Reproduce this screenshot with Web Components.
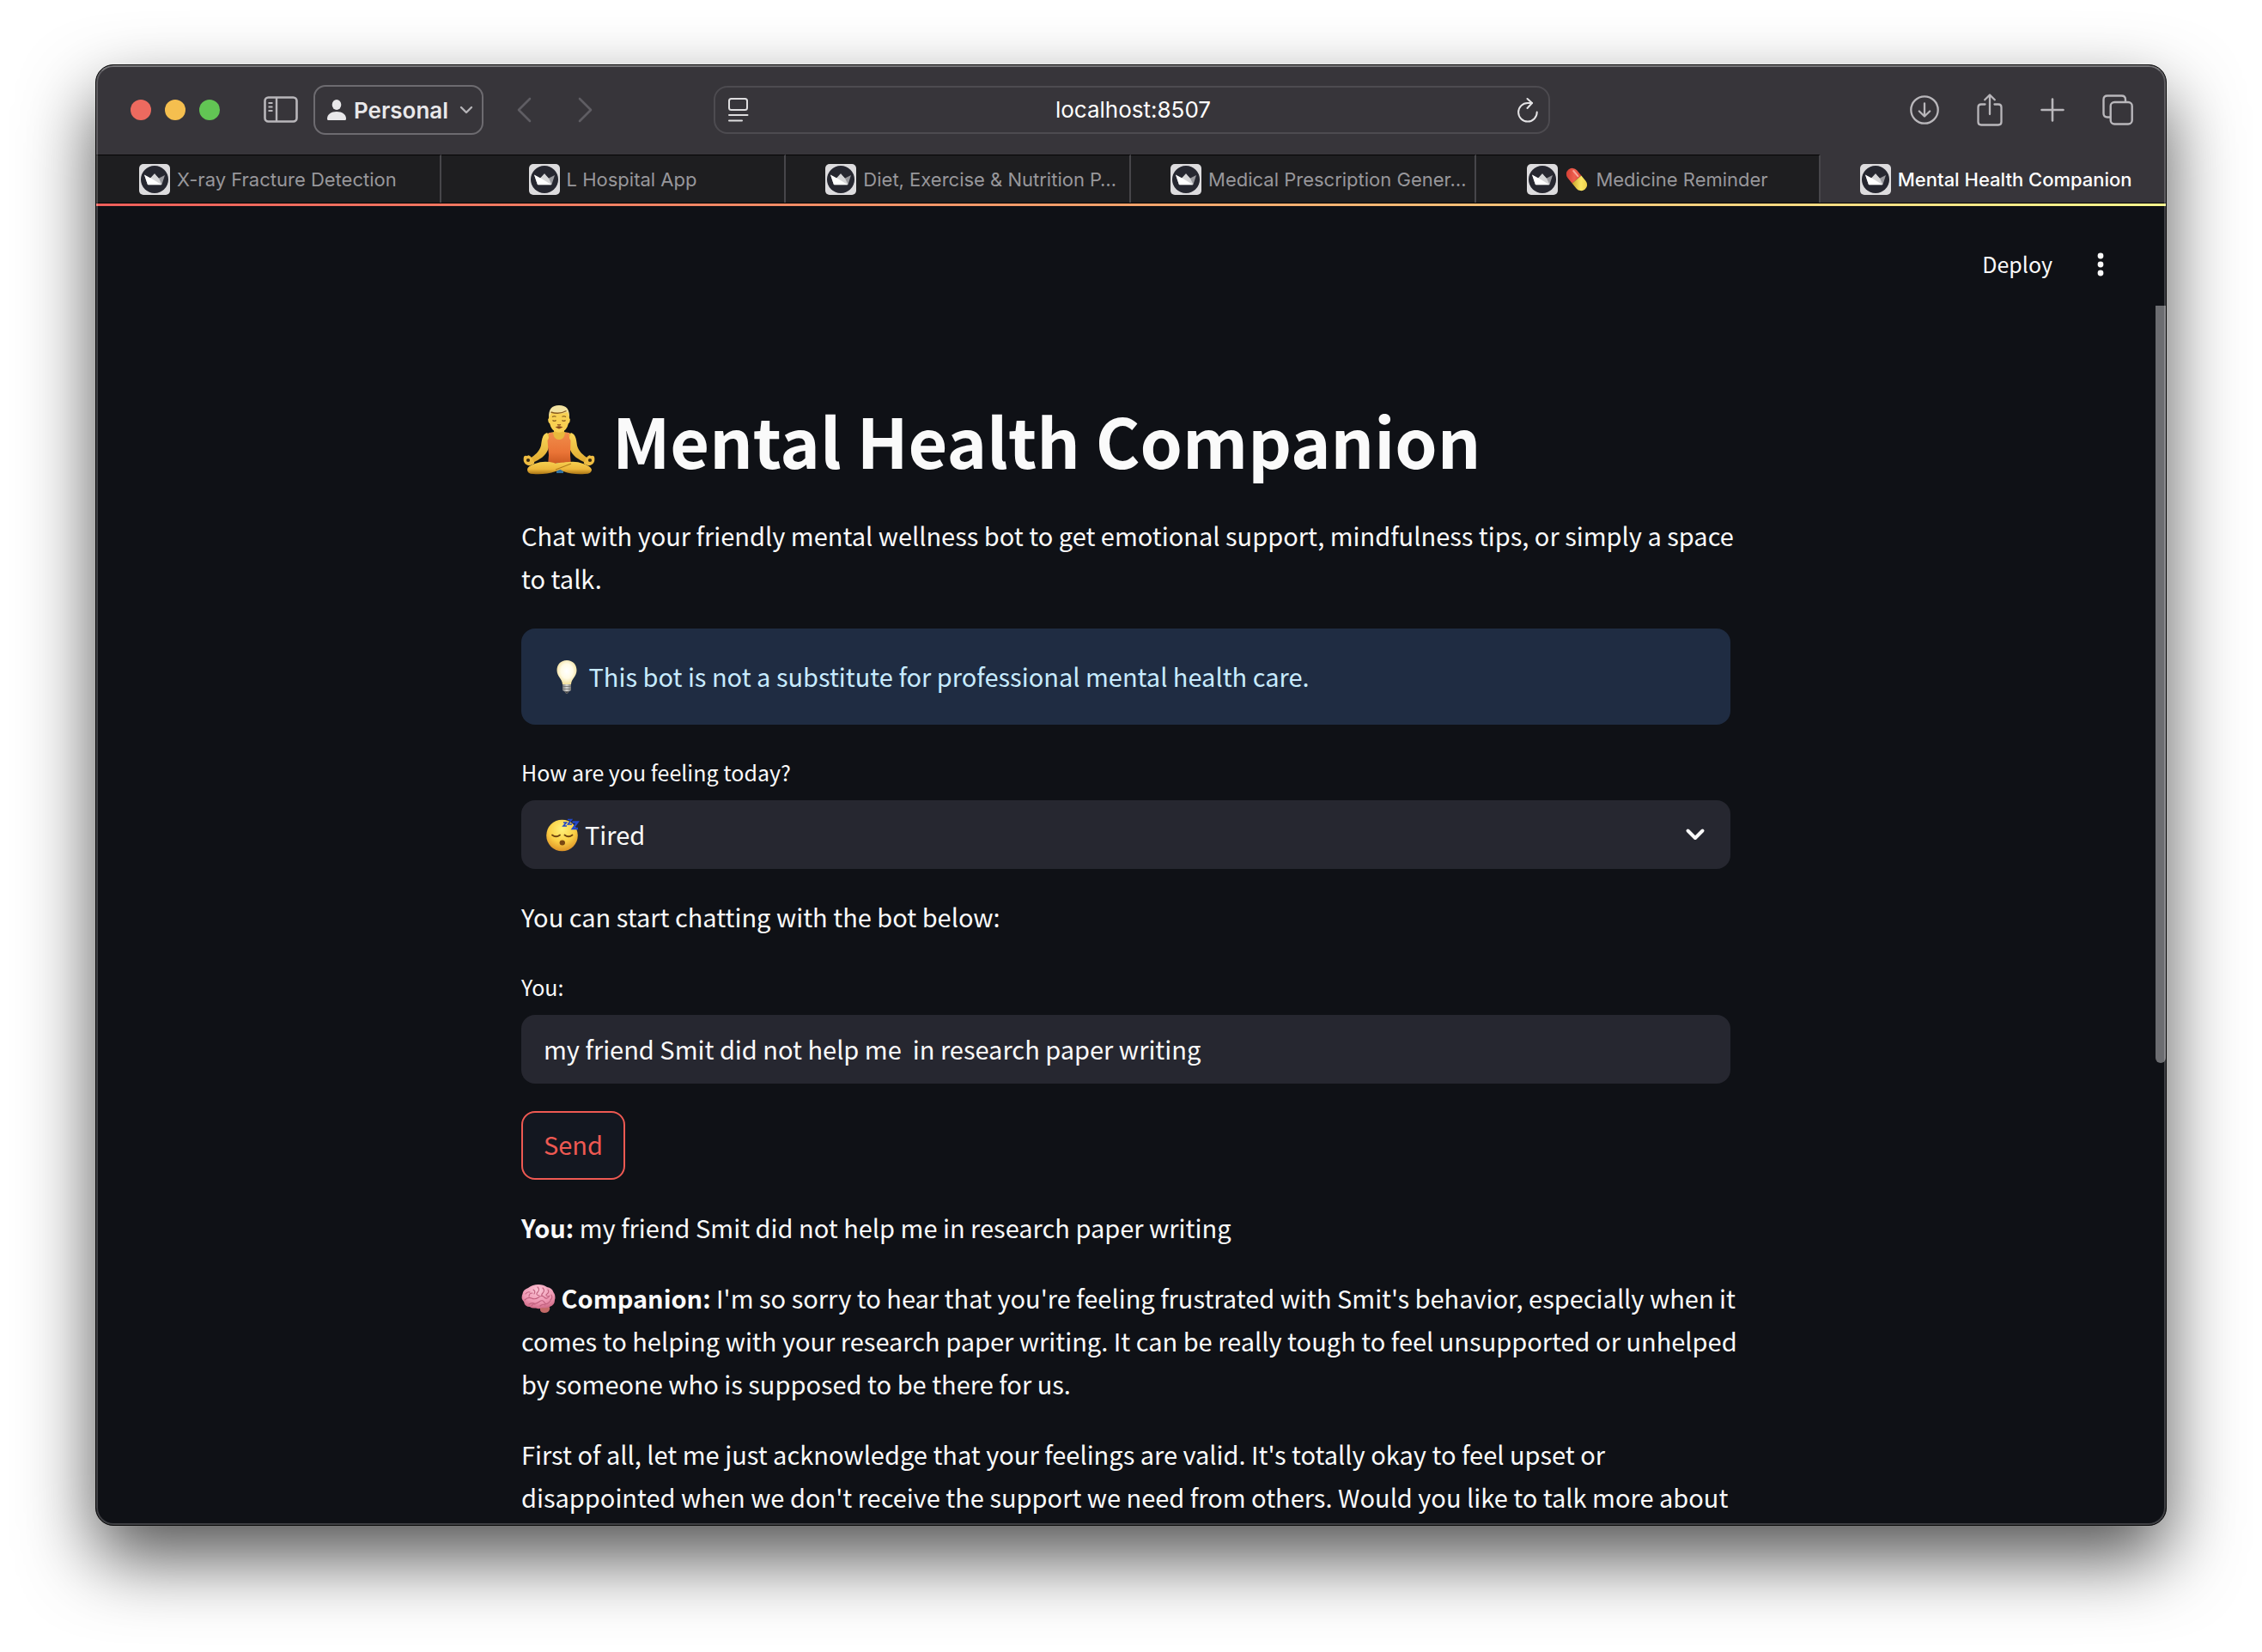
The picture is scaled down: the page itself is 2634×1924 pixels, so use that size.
<!DOCTYPE html>
<html lang="en">
<head>
<meta charset="utf-8">
<title>Mental Health Companion</title>
<style>
  html, body { height: 100%; margin: 0; }
  body {
    --ui: Inter, "Liberation Sans", sans-serif;
    --app: "Noto Sans CJK SC", "Noto Sans", sans-serif;
    box-sizing: border-box;
    display: flex;
    padding: 75px 111px 147px;
    background: #fff;
    overflow: hidden;
  }
</style>
</head>
<body>
<browser-window>
  <browser-toolbar slot="toolbar" address="localhost:8507" profile="Personal"></browser-toolbar>
  <nav slot="tabs" aria-label="Tabs" style="display:contents">
    <browser-tab>X-ray Fracture Detection</browser-tab>
    <browser-tab>L Hospital App</browser-tab>
    <browser-tab clipped>Diet, Exercise &amp; Nutrition P…</browser-tab>
    <browser-tab clipped>Medical Prescription Gener…</browser-tab>
    <browser-tab><ui-icon name="pill" style="--w:28px;--h:30px"></ui-icon>Medicine Reminder</browser-tab>
    <browser-tab active>Mental Health Companion</browser-tab>
  </nav>
  <app-header></app-header>
  <chat-page></chat-page>
</browser-window>

<script>
const ICONS = {
  sidebar: ['0 0 40 32', `<g fill="none" stroke="#b9b7bb"><rect x="1.5" y="1.5" width="37" height="28" rx="4" stroke-width="2.6"/><path d="M15 2v27" stroke-width="2.4"/><path d="M5.5 8h5M5.5 12.500h5M5.500 17h5" stroke-width="2"/></g>`],
  person: ['0 0 22 24', `<g fill="#e9e8ea"><ellipse cx="11" cy="6" rx="5.300" ry="6"/><path d="M0 22.500C0 17 4.500 14 11 14s11 3 11 8.500q0 1.500-1.500 1.500h-19Q0 24 0 22.500z"/></g>`],
  chevronSmall: ['0 0 16 10', `<path d="M2 2l6 6 6-6" fill="none" stroke="#b5b3b7" stroke-width="2.400" stroke-linecap="round" stroke-linejoin="round"/>`],
  back: ['0 0 18 30', `<path d="M16 2L3 15l13 13" fill="none" stroke="#5f5d63" stroke-width="2.600" stroke-linecap="round" stroke-linejoin="round"/>`],
  forward: ['0 0 18 30', `<path d="M2 2l13 13L2 28" fill="none" stroke="#5f5d63" stroke-width="2.600" stroke-linecap="round" stroke-linejoin="round"/>`],
  reader: ['0 0 24 28', `<g fill="none" stroke="#dedddf" stroke-width="2" stroke-linecap="round"><rect x="1" y="1" width="21" height="13" rx="2.500"/><path d="M1 20h21.500M1 26.500h15"/></g>`],
  reload: ['0 0 24 28', `<g fill="none" stroke="#e4e3e5" stroke-width="2" stroke-linecap="round" stroke-linejoin="round"><path d="M22.700 16.500A10.800 10.800 0 1 1 12 6h5"/><path d="M11.500 1l5.500 5-5.500 6"/></g>`],
  download: ['0 0 34 34', `<g fill="none" stroke="#b9b7bb" stroke-width="2.300" stroke-linecap="round" stroke-linejoin="round"><circle cx="17" cy="17" r="15.700"/><path d="M17 9.500V24M10.800 18.500l6.200 6 6.200-6"/></g>`],
  share: ['0 0 30 38', `<g fill="none" stroke="#b9b7bb" stroke-width="2.300" stroke-linecap="round" stroke-linejoin="round"><path d="M9.500 12.500H5q-3.500 0-3.500 3.500v17q0 3.500 3.500 3.500h20q3.500 0 3.500-3.500V16q0-3.500-3.500-3.500h-4.500"/><path d="M15 24V2M9.200 7.300L15 1.500l5.800 5.800"/></g>`],
  plus: ['0 0 28 28', `<path d="M14 1.500v25M1.500 14h25" fill="none" stroke="#b9b7bb" stroke-width="2.600" stroke-linecap="round"/>`],
  copies: ['0 0 36 36', `<g fill="none" stroke="#b9b7bb" stroke-width="2.400"><rect x="9.700" y="9" width="25" height="25.500" rx="4.500"/><path d="M9 26.500H6q-4.500 0-4.500-4.500V6q0-4.500 4.500-4.500h16.500Q27 1.500 27 6v2.500"/></g>`],
  favicon: ['0 0 36 36', `<rect width="36" height="36" rx="5" fill="#dddcde"/><circle cx="18" cy="18" r="16" fill="#262730"/><path d="M6 12.500L13 17l5-5.700 4.500 5.400L30 13l-3.400 10.500q-.2.800-1 .8H10.700q-.8 0-1-.8z" fill="#98989d"/><path d="M12.500 17L18 11.300l5 5.500 3.500 7.200z" fill="#d6d6d8"/><path d="M6 12.500L14 16.800l12.300 7.300-.8.200H10.700q-.8 0-1-.8z" fill="#fff"/>`],
  dots: ['0 0 8 28', `<g fill="#fafafa"><circle cx="4" cy="4" r="3.400"/><circle cx="4" cy="14" r="3.400"/><circle cx="4" cy="24" r="3.400"/></g>`],
  chevron: ['0 0 22 14', `<path d="M2.500 2.500l8.500 8.500 8.500-8.500" fill="none" stroke="#fafafa" stroke-width="4" stroke-linecap="round" stroke-linejoin="round"/>`],
  pill: ['0 0 28 30', `<defs><linearGradient id="r" x1="0" y1="1" x2="1" y2="0"><stop stop-color="#c9342c"/><stop offset=".6" stop-color="#f0604f"/><stop offset="1" stop-color="#e04a3c"/></linearGradient><linearGradient id="y" x1="0" y1="1" x2="1" y2="0"><stop stop-color="#c9a22a"/><stop offset=".5" stop-color="#fbe664"/><stop offset="1" stop-color="#e8c840"/></linearGradient></defs><g transform="rotate(50 14 15)"><path d="M14 8H6a7 7 0 0 0 0 14h8z" fill="url(#r)"/><path d="M14 8h8a7 7 0 0 1 0 14h-8z" fill="url(#y)"/><path d="M4 11.500h8" stroke="#f9a79b" stroke-width="2" stroke-linecap="round"/></g>`],
  lotus: ['0 0 88 84', `<defs>
    <linearGradient id="sk" x1="0" y1="0" x2="0" y2="1"><stop stop-color="#fad75a"/><stop offset="1" stop-color="#e0a92f"/></linearGradient>
    <linearGradient id="sh" x1="0" y1="0" x2="0" y2="1"><stop stop-color="#f08c4a"/><stop offset=".6" stop-color="#ea7436"/><stop offset="1" stop-color="#c8561e"/></linearGradient>
    <linearGradient id="lg" x1="0" y1="0" x2="0" y2="1"><stop stop-color="#f6cf50"/><stop offset=".6" stop-color="#eeb73a"/><stop offset="1" stop-color="#a87416"/></linearGradient></defs>
    <path d="M30 34c-6 2-6 9-7 15-2 7-7 11-13 15l3 5c9-4 15-8 18-15l4-14z" fill="url(#sk)"/>
    <path d="M58 34c6 2 6 9 7 15 2 7 7 11 13 15l-3 5c-9-4-15-8-18-15l-4-14z" fill="url(#sk)"/>
    <path d="M38 26h12v7l8 2-4 9H34l-4-9 8-2z" fill="#e9b93c"/>
    <path d="M32 34q3-.5 5 0 1 8 7 8t7-8q2-.5 5 0-1 6 1.500 9L57 60l1 12H31l1-12-1.500-17Q33 40 32 34z" fill="url(#sh)"/>
    <path d="M41 69h8v12h-8z" fill="#2f6fa0"/>
    <path d="M3 62q-1.500 5 2 8.500 4 3 8 .5 3-1 2-3l-3-5q-3-4-5-2-3-1-4 1z" fill="#efbd42"/><circle cx="8" cy="66" r="2.100" fill="#3a2a10"/>
    <path d="M85 62q1.500 5-2 8.500-4 3-8 .5-3-1-2-3l3-5q3-4 5-2 3-1 4 1z" fill="#efbd42"/><circle cx="80" cy="66" r="2.100" fill="#3a2a10"/>
    <path d="M50 69q12-3 22 1 9 3 10 7 0 5-8 5-14 1-25-3l-13-8q8-3 14-2z" fill="url(#lg)"/>
    <path d="M38 69q-12-3-22 1-9 3-9 7 0 5 7 5 14 1 26-3l22-9q-12-4-20 1z" fill="url(#lg)"/>
    <path d="M40 77l18-7" stroke="#b07c1c" stroke-width="1.200" fill="none"/>
    <path d="M33 10q-1 3-1 7-1.500 1-.5 4 .5 2 1.500 2 2 8 7.500 10 3.500 1.300 7 0Q53 31 55 23q1 0 1.500-2 1-3-.5-4 0-4-1-7-3-4-11-4t-11 4z" fill="#f8d052"/>
    <path d="M32.500 16Q31 2 44 2t11.500 14l-1.500-6q-10 3-19 0z" fill="#f2e2a0"/>
    <path d="M34.500 10q10 3 18-1.500" stroke="#8a5a1c" stroke-width="1.400" fill="none"/>
    <path d="M36 15.500q2-1.300 4.500-.3M47.500 15.200q2.500-1 4.500.3M36.500 19.500q2 1.500 4 0M47.500 19.500q2 1.500 4 0" stroke="#7a4e18" stroke-width="1.200" fill="none"/>
    <path d="M42 24.500q2 1.200 4 0M41 27.500q3-1.200 6 0l-3 1.300z" stroke="#8a4a1c" stroke-width="1.100" fill="#8a4a1c"/>`],
  bulb: ['0 0 40 40', `<defs><radialGradient id="b" cx=".5" cy=".45" r=".6"><stop stop-color="#fff"/><stop offset=".5" stop-color="#fffbe6"/><stop offset="1" stop-color="#efd98c"/></radialGradient><linearGradient id="m"><stop stop-color="#777"/><stop offset=".5" stop-color="#d8d8d4"/><stop offset="1" stop-color="#777"/></linearGradient></defs><path d="M21 1c7 0 11.500 5 11.500 11.500C32.500 20 26.500 22 26 29H16C15.500 22 9.500 20 9.500 12.500 9.500 6 14 1 21 1z" fill="url(#b)"/><path d="M16 29h10v7q-1 1-2.500 1.200L22 39.500h-2l-1.500-2.300Q17 37 16 36z" fill="url(#m)"/><path d="M16 31.500h10M16 34.500h10" stroke="#6e6e6a" stroke-width=".8"/><path d="M18.500 37.200h5L22 39.500h-2z" fill="#444"/>`],
  sleepy: ['0 0 40 40', `<defs><radialGradient id="f" cx=".5" cy=".3" r=".75"><stop stop-color="#fff27a"/><stop offset=".55" stop-color="#fbcf45"/><stop offset="1" stop-color="#d98a22"/></radialGradient></defs><circle cx="19.500" cy="21" r="18.300" fill="url(#f)"/><g fill="none" stroke="#6e4310" stroke-width="1.800" stroke-linecap="round"><path d="M8 20.500q4.500 3.500 9 0M22.500 20.500q4.500 3.500 9 0"/></g><ellipse cx="19.800" cy="29.500" rx="3.200" ry="3" fill="#7a4812"/><g fill="none" stroke="#2348c8" stroke-linejoin="miter"><path d="M21 6h3.500l-3.500 4h4" stroke-width="1.600"/><path d="M26 2.500h4.500L26.500 8h4.500" stroke-width="1.700"/><path d="M31.500 5.500h6l-5.500 7.500h6" stroke-width="2.400"/></g>`],
  brain: ['0 0 40 34', `<defs><radialGradient id="p" cx=".5" cy=".25" r=".8"><stop stop-color="#fbc6d6"/><stop offset=".6" stop-color="#ee97b2"/><stop offset="1" stop-color="#c9627f"/></radialGradient></defs><path d="M22 26q4 0 9-1 3 1 2 4-1 4-6 4-4 0-5-3z" fill="#c46a68"/><path d="M3 20Q-1 16 1.500 11 2 6 8 4q5-4 12-4 6 0 10 3 6 1 7.500 6 3 4 1.500 9 0 6-6 8-4 2-8 1-4 2-8 .5-5 .5-7-1.500Q4 26 3 20z" fill="url(#p)"/><g fill="none" stroke="#c0607e" stroke-width="1.100" stroke-linecap="round"><path d="M4 18q4-4 8-2t8-1 7 0 6-2M9 23q4-2 6-1t6-2 6 1 7-2M5 11q2-3 5-2M9 14q0-4 4-4M14 6q3 2 1 5M19 3q3 3 0 6t2 4M25 4q3 3 0 6t1 4M31 6q2 3-1 5t2 3M12 25q1-3 4-2M35 12q2 3-1 6M22 25q3-3 6-1"/></g>`]
};

function define(name, css, html, setup) {
  const template = document.createElement('template');
  template.innerHTML = `<style>*{box-sizing:border-box}:host{box-sizing:border-box}${css}</style>${html}`;
  customElements.define(name, class extends HTMLElement {
    constructor() {
      super();
      this.attachShadow({ mode: 'open' }).append(template.content.cloneNode(true));
    }
    connectedCallback() { if (setup) setup(this, this.shadowRoot); }
  });
}

define('ui-icon', `
  :host { display: inline-block; flex: none; width: var(--w); height: var(--h); }
  svg { display: block; width: 100%; height: 100%; overflow: visible; }
`, `<svg aria-hidden="true"></svg>`, (el, root) => {
  const [box, body] = ICONS[el.getAttribute('name')];
  const svg = root.querySelector('svg');
  svg.setAttribute('viewBox', box);
  svg.innerHTML = body;
});

define('browser-window', `
  :host {
    position: relative; flex: 1; min-width: 0; display: flex; flex-direction: column;
    border: 1px solid #0a0a0a; border-radius: 21px; background: #0f1116; overflow: hidden;
    box-shadow: 0 38px 84px rgba(0,0,0,.67);
  }
  :host::after {
    content: ""; position: absolute; inset: 0; border: 2px solid rgba(255,255,255,.2);
    border-top-color: rgba(255,255,255,.32); border-radius: 20px; pointer-events: none;
  }
  .tabs { display: flex; flex: none; height: 56px; background: #1e1e20; }
  .rainbow { flex: none; height: 4px; border-top: 1px solid #050505; background: linear-gradient(90deg, #ee5f5b, #f5a36c 50%, #fbf98e) padding-box; }
`, `<slot name="toolbar"></slot><div class="tabs"><slot name="tabs"></slot></div><div class="rainbow"></div><slot></slot>`);

define('browser-toolbar', `
  :host { flex: none; display: flex; align-items: center; height: 104px; padding: 0 38px 0 40px; background: #37353a; font-family: var(--ui); }
  .side { flex: 1; display: flex; align-items: center; }
  button { display: flex; align-items: center; padding: 0; border: 0; background: none; font: inherit; }
  .lights { display: flex; gap: 16px; margin-right: 51px; }
  .lights button { width: 24px; height: 24px; border-radius: 50%; }
  .profile { height: 58px; margin: 0 38px 0 18px; padding: 0 10px 0 14px; border: 2px solid #6d6b70; border-radius: 14px; color: #e9e8ea; font-weight: 600; font-size: 26px; gap: 9px; }
  .profile ui-icon:last-child { margin-left: 4px; }
  .history { display: flex; gap: 54px; }
  .address { flex: none; width: 974px; height: 56px; display: flex; align-items: center; padding: 0 12px 0 15px; border: 2px solid #4d4b50; border-radius: 16px; }
  input { flex: 1; min-width: 0; border: 0; padding: 0; background: none; color: #fff; font: 400 26px/30px var(--ui); text-align: center; outline: 0; }
  .actions { justify-content: flex-end; }
  .actions button + button { margin-left: 44px; }
`, `
  <div class="side">
    <div class="lights"><button aria-label="Close" style="background:#ed6a5f"></button><button aria-label="Minimise" style="background:#f5bf4f"></button><button aria-label="Zoom" style="background:#62c554"></button></div>
    <button aria-label="Sidebar"><ui-icon name="sidebar" style="--w:40px;--h:32px"></ui-icon></button>
    <button class="profile"><ui-icon name="person" style="--w:22px;--h:24px"></ui-icon><span></span><ui-icon name="chevronSmall" style="--w:16px;--h:10px"></ui-icon></button>
    <div class="history"><button aria-label="Back"><ui-icon name="back" style="--w:18px;--h:30px"></ui-icon></button><button aria-label="Forward"><ui-icon name="forward" style="--w:18px;--h:30px"></ui-icon></button></div>
  </div>
  <div class="address"><ui-icon name="reader" style="--w:24px;--h:28px"></ui-icon><input aria-label="Address"><button aria-label="Reload"><ui-icon name="reload" style="--w:24px;--h:28px"></ui-icon></button></div>
  <div class="side actions">
    <button aria-label="Downloads"><ui-icon name="download" style="--w:34px;--h:34px"></ui-icon></button>
    <button aria-label="Share"><ui-icon name="share" style="--w:30px;--h:38px"></ui-icon></button>
    <button aria-label="New tab"><ui-icon name="plus" style="--w:28px;--h:28px"></ui-icon></button>
    <button aria-label="Tab overview"><ui-icon name="copies" style="--w:36px;--h:36px"></ui-icon></button>
  </div>
`, (el, root) => {
  root.querySelector('.profile span').textContent = el.getAttribute('profile');
  root.querySelector('input').value = el.getAttribute('address');
});

define('browser-tab', `
  :host { flex: 1 1 0; min-width: 0; display: flex; border-top: 1px solid #050505; border-right: 2px solid #47464a; color: #98979b; font: 400 22px/28px var(--ui); }
  :host([active]) { background: #37353a; border-color: #37353a; color: #fff; font-weight: 500; }
  a { flex: 1; min-width: 0; display: flex; align-items: center; justify-content: center; gap: 8px; color: inherit; text-decoration: none; white-space: nowrap; }
  :host([clipped]) a { justify-content: flex-start; padding-left: 46px; }
  :host([active]) a { padding-left: 8px; }
  span { display: flex; align-items: center; gap: 8px; }
`, `<a href="#"><ui-icon name="favicon" style="--w:36px;--h:36px"></ui-icon><span><slot></slot></span></a>`);

define('app-header', `
  :host { flex: none; display: flex; align-items: center; justify-content: flex-end; gap: 36px; height: 116px; padding: 20px 56px 0; }
  button { display: flex; justify-content: center; padding: 0 0 2px; border: 0; background: none; color: #fafafa; font: 400 25px/40px var(--app); }
  .menu { width: 40px; padding: 0; }
`, `<button>Deploy</button><button class="menu" aria-label="Main menu"><ui-icon name="dots" style="--w:8px;--h:28px"></ui-icon></button>`);

define('chat-page', `
  :host { position: relative; flex: 1; min-height: 0; display: flex; justify-content: center; padding: 100px 12px 0 0; overflow: hidden; color: #fafafa; font: 400 29px/50px var(--app); }
  main { flex: 0 1 1408px; min-width: 0; display: flex; flex-direction: column; gap: 32px; }
  h1 { margin: 0; font-size: 79px; line-height: 112px; font-weight: 700; white-space: nowrap; }
  h1 ui-icon { vertical-align: -8px; }
  p { margin: -2px 0 2px; white-space: nowrap; }
  p ui-icon { vertical-align: -6px; }
  .scrollbar { position: absolute; top: 0; right: 0; width: 12px; height: 882px; border-radius: 0 0 6px 6px; background: #6c6d71; }
`, `
  <main>
    <h1><ui-icon name="lotus" style="--w:88px;--h:84px"></ui-icon> Mental Health Companion</h1>
    <p>Chat with your friendly mental wellness bot to get emotional support, mindfulness tips, or simply a space<br>to talk.</p>
    <info-alert>This bot is not a substitute for professional mental health care.</info-alert>
    <select-field label="How are you feeling today?" value="Tired"></select-field>
    <p>You can start chatting with the bot below:</p>
    <text-field label="You:" value="my friend Smit did not help me  in research paper writing"></text-field>
    <send-button>Send</send-button>
    <p><strong>You:</strong> my friend Smit did not help me in research paper writing</p>
    <p><ui-icon name="brain" style="--w:40px;--h:34px"></ui-icon> <strong>Companion:</strong> I'm so sorry to hear that you're feeling frustrated with Smit's behavior, especially when it<br>comes to helping with your research paper writing. It can be really tough to feel unsupported or unhelped<br>by someone who is supposed to be there for us.</p>
    <p>First of all, let me just acknowledge that your feelings are valid. It's totally okay to feel upset or<br>disappointed when we don't receive the support we need from others. Would you like to talk more about</p>
  </main>
  <div class="scrollbar"></div>
`);

define('info-alert', `
  :host { display: block; padding: 30px 32px 32px; border-radius: 16px; background: #1f2c42; color: #c7ebff; white-space: nowrap; }
  ui-icon { vertical-align: -8px; }
`, `<ui-icon name="bulb" style="--w:40px;--h:40px"></ui-icon> <slot></slot>`);

define('select-field', `
  :host { display: block; }
  label { display: block; height: 56px; font-size: 25px; line-height: 46px; }
  .box { position: relative; display: flex; align-items: center; }
  select { appearance: none; flex: 1; height: 80px; padding: 0 64px 2px 74px; border: 0; border-radius: 16px; background: #262730; color: #fafafa; font: 400 29px/50px var(--app); }
  .face { position: absolute; left: 28px; pointer-events: none; }
  .arrow { position: absolute; right: 30px; pointer-events: none; }
`, `<label for="field"></label><div class="box"><select id="field"><option></option></select><ui-icon class="face" name="sleepy" style="--w:40px;--h:40px"></ui-icon><ui-icon class="arrow" name="chevron" style="--w:22px;--h:14px"></ui-icon></div>`,
(el, root) => {
  root.querySelector('label').textContent = el.getAttribute('label');
  root.querySelector('option').textContent = el.getAttribute('value');
});

define('text-field', `
  :host { display: block; }
  label { display: block; height: 56px; font-size: 25px; line-height: 46px; }
  input { display: block; width: 100%; height: 80px; padding: 0 26px 2px; border: 0; border-radius: 16px; background: #262730; color: #fafafa; font: 400 29px/50px var(--app); }
`, `<label for="field"></label><input id="field" type="text">`, (el, root) => {
  root.querySelector('label').textContent = el.getAttribute('label');
  root.querySelector('input').value = el.getAttribute('value');
});

define('send-button', `
  :host { display: flex; }
  button { height: 80px; padding: 0 24px 4px; border: 2px solid #ee5952; border-radius: 16px; background: #131720; color: #ee5952; font: 400 29px/50px var(--app); }
`, `<button><slot></slot></button>`);
</script>
</body>
</html>
